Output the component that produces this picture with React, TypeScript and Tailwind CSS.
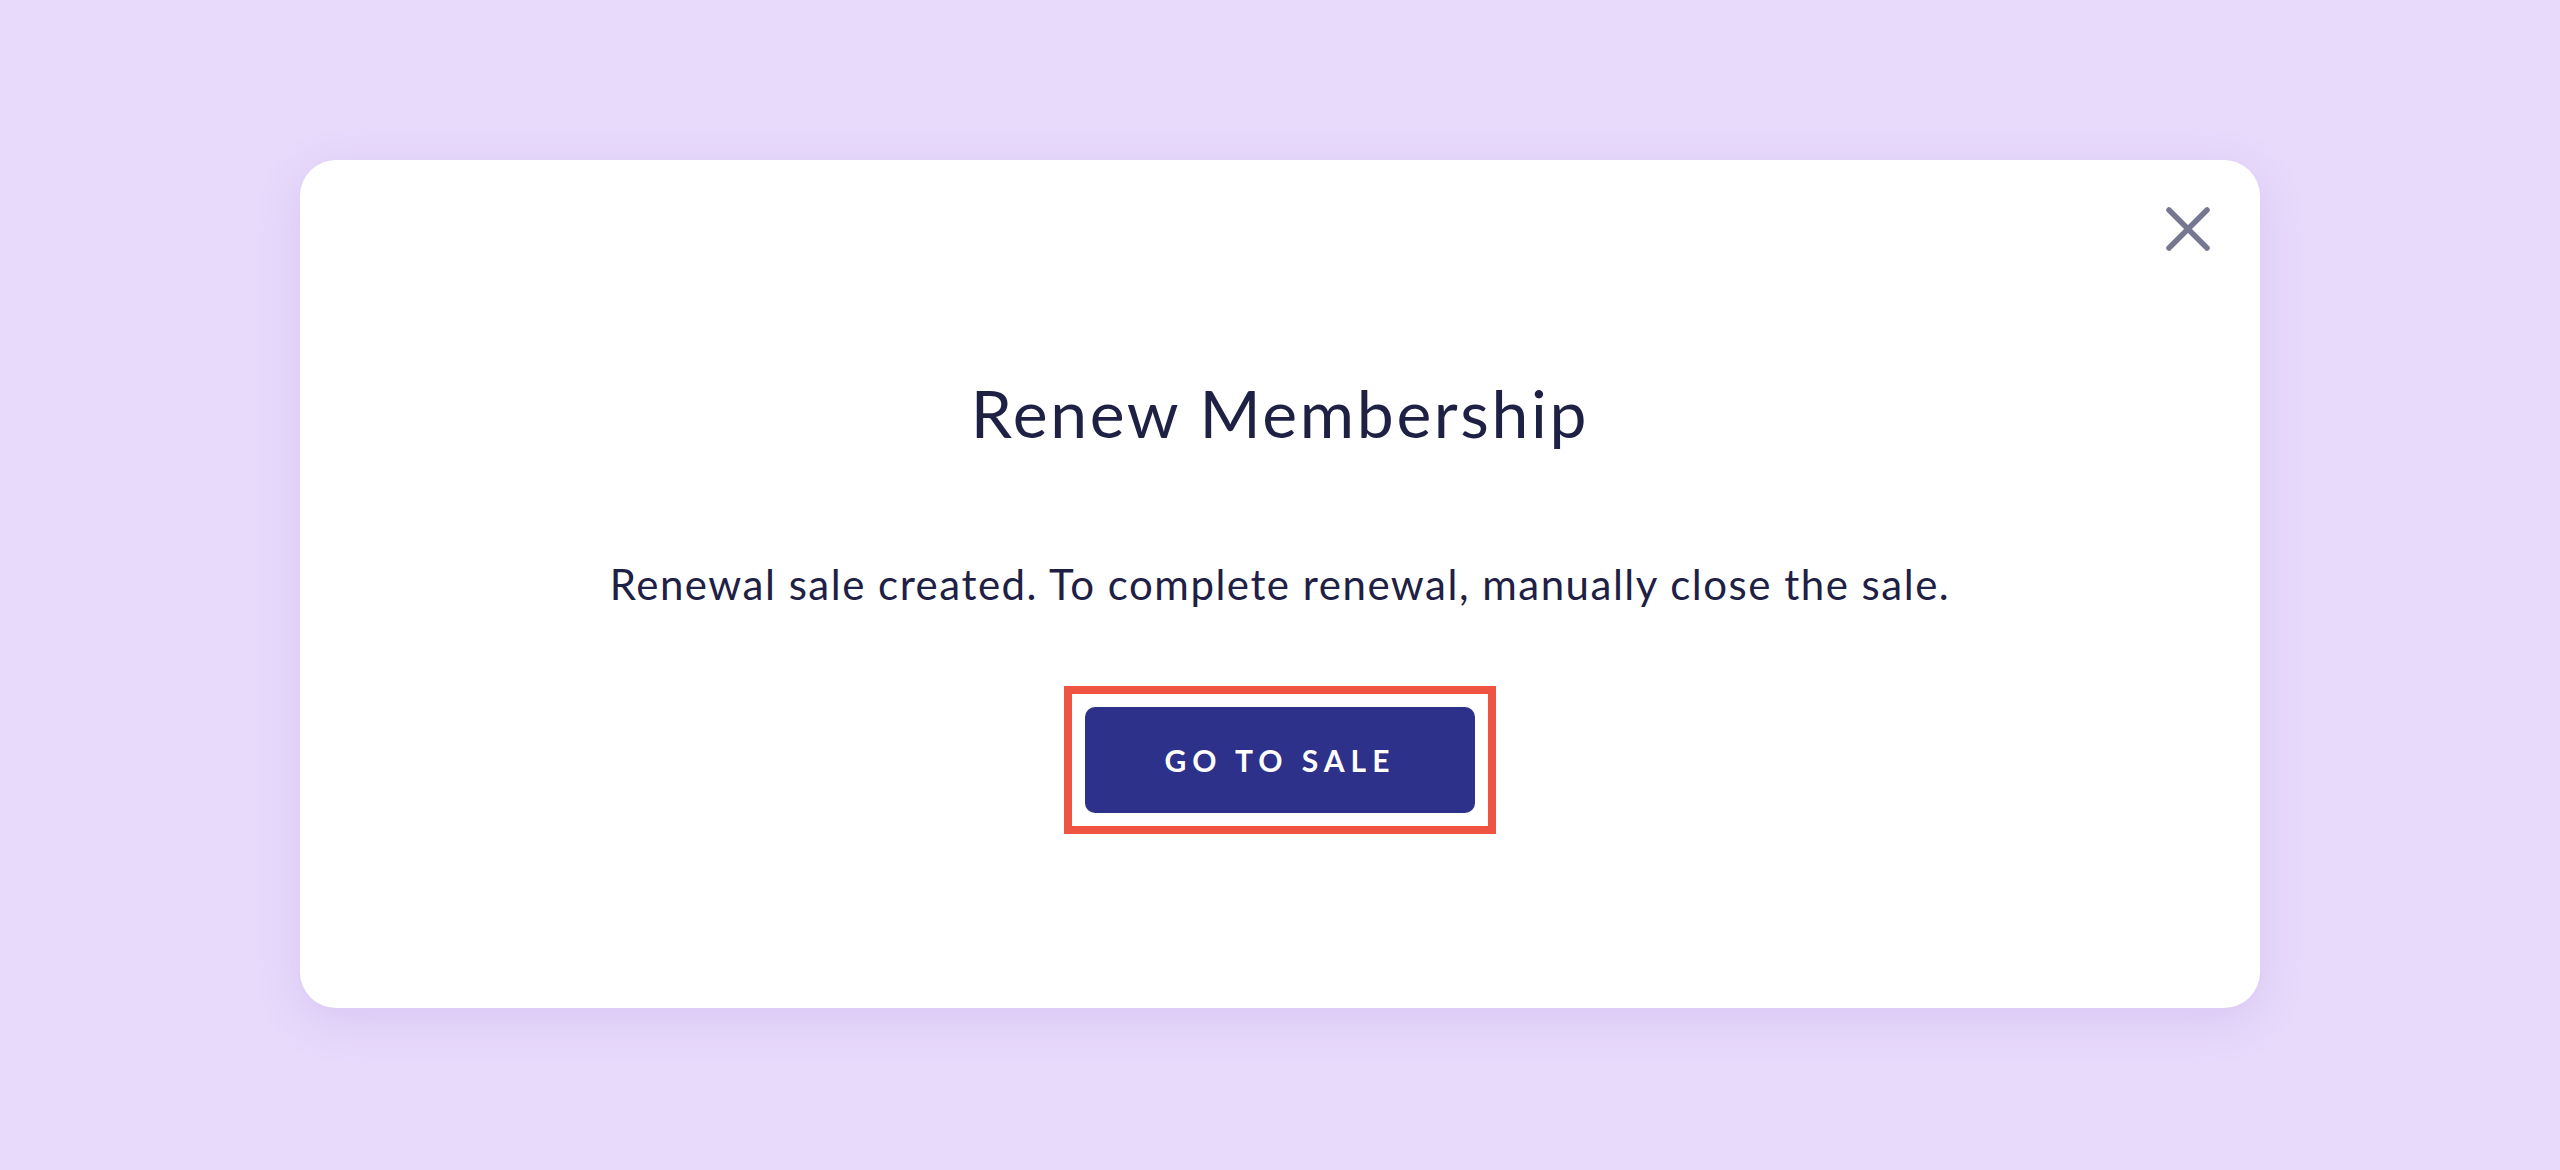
// Modal de renovação: título, mensagem e botão destacado
export default function App() {
    return (
        <div className="min-h-[1170px] w-full bg-[#e8dafb] flex justify-center pt-[160px] font-['Lato',sans-serif]">
            <div className="relative w-[1960px] h-[848px] bg-white rounded-[36px] shadow-[0_12px_48px_rgba(120,80,200,0.14)] flex flex-col items-center pt-[220px]">
                <button className="absolute top-[47px] right-[50px] w-[44px] h-[44px] flex items-center justify-center text-[#767891]">
                    <svg width="44" height="44" viewBox="0 0 44 44" fill="none" stroke="currentColor" strokeWidth="5.5" strokeLinecap="round">
                        <path d="M3 3 L41 41" />
                        <path d="M41 3 L3 41" />
                    </svg>
                </button>

                <h1 className="text-[66px] leading-none font-normal tracking-[0.04em] text-[#1e2044]">Renew Membership</h1>

                <p className="mt-[117px] text-[42px] leading-none tracking-[0.036em] text-[#1e2044]">
                    Renewal sale created. To complete renewal, manually close the sale.
                </p>

                <div className="mt-[81px] border-[8px] border-[#ef5443] p-[13px]">
                    <button className="w-[390px] h-[106px] rounded-[10px] bg-[#2e3189] text-white text-[30px] font-bold tracking-[0.2em] flex items-center justify-center">
                        GO TO SALE
                    </button>
                </div>
            </div>
        </div>
    );
}
